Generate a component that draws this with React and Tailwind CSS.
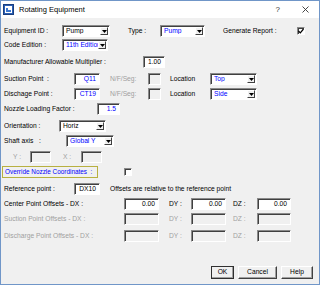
import React from 'react';

const Sunken = ({ w, children, disabled = false, blue = false }) => (
  <div
    className={`${w} h-[12px] flex items-center justify-end pr-[3px] border border-t-[#8a8a8a] border-l-[#8a8a8a] border-r-white border-b-white shadow-[inset_1px_1px_0_#404040] ${
      disabled ? 'bg-[#f0f0f0]' : 'bg-white'
    } ${blue ? 'text-[#0000ff]' : 'text-black'}`}
  >
    {children}
  </div>
);

const Drop = ({ w, value, blue = false }) => (
  <div className={`${w} h-[12px] flex items-center bg-white border border-t-[#8a8a8a] border-l-[#8a8a8a] border-r-white border-b-white shadow-[inset_1px_1px_0_#404040]`}>
    <span className={`flex-1 pl-[3px] overflow-hidden ${blue ? 'text-[#0000ff]' : 'text-black'}`}>{value}</span>
    <span className="w-[8px] h-[8px] mr-[1px] shrink-0 bg-[#f0f0f0] border border-t-white border-l-white border-r-[#404040] border-b-[#404040] flex items-center justify-center">
      <svg width="5" height="3" viewBox="0 0 5 3">
        <path d="M0 0h5L2.5 3z" fill="#000" />
      </svg>
    </span>
  </div>
);

const Check = ({ checked = false }) => (
  <div className="w-[8px] h-[8px] bg-white border border-t-[#8a8a8a] border-l-[#8a8a8a] border-r-white border-b-white shadow-[inset_1px_1px_0_#404040] flex items-center justify-center">
    {checked && (
      <svg width="6" height="6" viewBox="0 0 6 6">
        <path d="M0.5 3l1.8 1.8L5.5 1" fill="none" stroke="#000" strokeWidth="1.2" />
      </svg>
    )}
  </div>
);

const Button = ({ w, children, primary = false }) => (
  <div
    className={`${w} h-[13px] flex items-center justify-center bg-[#f0f0f0] border ${
      primary ? 'border-[#303030]' : 'border-t-white border-l-white border-r-[#404040] border-b-[#404040]'
    } shadow-[inset_-1px_-1px_0_#a0a0a0]`}
  >
    {children}
  </div>
);

const OffsetRow = ({ label, disabled = false, className }) => {
  const txt = disabled ? 'text-[#a0a0a0]' : 'text-black';
  return (
    <div className={`flex items-center h-[12px] pl-[3px] ${className}`}>
      <span className={`w-[120px] ${txt}`}>{label}</span>
      <Sunken w="w-[35px]" disabled={disabled}>{disabled ? '' : '0.00'}</Sunken>
      <span className={`ml-[10px] w-[22px] ${txt}`}>DY :</span>
      <Sunken w="w-[35px]" disabled={disabled}>{disabled ? '' : '0.00'}</Sunken>
      <span className={`ml-[7px] w-[24px] ${txt}`}>DZ :</span>
      <Sunken w="w-[34px]" disabled={disabled}>{disabled ? '' : '0.00'}</Sunken>
    </div>
  );
};

export default function App() {
  return (
    <div className="w-[320px] h-[285px] flex flex-col border border-[#7096c8] bg-[#f0f0f0] font-['Liberation_Sans',Arial,sans-serif] text-[6.7px] leading-none text-black whitespace-nowrap overflow-hidden">
      {/* title bar */}
      <div className="h-[17px] shrink-0 flex items-center bg-white pl-[2px]">
        <svg width="11" height="11" viewBox="0 0 11 11">
          <rect x="0.5" y="0.5" width="10" height="10" fill="#2b5fb4" stroke="#1a3f80" />
          <rect x="2" y="2" width="7" height="7" fill="#ffffff" />
          <path d="M3 8V4h2v2h3v2z" fill="#3c78d0" />
        </svg>
        <span className="ml-[5px] text-[7.5px]">Rotating Equipment</span>
        <span className="ml-auto text-[8px] text-[#333]">?</span>
        <svg className="ml-[22px] mr-[10px]" width="7" height="7" viewBox="0 0 7 7">
          <path d="M0.5 0.5l6 6M6.5 0.5l-6 6" stroke="#333" strokeWidth="0.9" />
        </svg>
      </div>

      {/* Equipment ID / Type / Generate Report */}
      <div className="flex items-center h-[12px] mt-[7px] pl-[3px]">
        <span className="w-[58px]">Equipment ID :</span>
        <Drop w="w-[48px]" value="Pump" />
        <span className="ml-[18px] w-[32px]">Type :</span>
        <Drop w="w-[45px]" value="Pump" blue />
        <span className="ml-[18px] w-[74px]">Generate Report :</span>
        <Check checked />
      </div>

      <div className="flex items-center h-[12px] mt-[2px] pl-[3px]">
        <span className="w-[58px]">Code Edition :</span>
        <Drop w="w-[46px]" value="11th Edition" blue />
      </div>

      <div className="flex items-center h-[12px] mt-[5px] pl-[3px]">
        <span className="w-[139px]">Manufacturer Allowable Multiplier :</span>
        <Sunken w="w-[22px]">1.00</Sunken>
      </div>

      <div className="flex items-center h-[12px] mt-[5px] pl-[3px]">
        <span className="w-[70px]">Suction Point&nbsp;&nbsp;:</span>
        <Sunken w="w-[26px]" blue>Q11</Sunken>
        <span className="ml-[10px] w-[38px] text-[#a0a0a0]">N/F/Seg:</span>
        <Sunken w="w-[13px]" disabled />
        <span className="ml-[9px] w-[40px]">Location</span>
        <Drop w="w-[47px]" value="Top" blue />
      </div>

      <div className="flex items-center h-[12px] mt-[3px] pl-[3px]">
        <span className="w-[70px]">Dischage Point :</span>
        <Sunken w="w-[26px]" blue>CT19</Sunken>
        <span className="ml-[10px] w-[38px] text-[#a0a0a0]">N/F/Seg:</span>
        <Sunken w="w-[13px]" disabled />
        <span className="ml-[9px] w-[40px]">Location</span>
        <Drop w="w-[47px]" value="Side" blue />
      </div>

      <div className="flex items-center h-[12px] mt-[3px] pl-[3px]">
        <span className="w-[93px]">Nozzle Loading Factor :</span>
        <Sunken w="w-[23px]" blue>1.5</Sunken>
      </div>

      <div className="flex items-center h-[12px] mt-[5px] pl-[3px]">
        <span className="w-[55px]">Orientation :</span>
        <Drop w="w-[47px]" value="Horiz" />
      </div>

      <div className="flex items-center h-[12px] mt-[3px] pl-[3px]">
        <span className="w-[62px]">Shaft axis&nbsp;&nbsp;&nbsp;:</span>
        <Drop w="w-[48px]" value="Global Y" blue />
      </div>

      <div className="flex items-center h-[12px] mt-[4px] pl-[12px] text-[#a0a0a0]">
        <span className="w-[17px]">Y :</span>
        <Sunken w="w-[21px]" disabled />
        <span className="ml-[12px] w-[18px]">X :</span>
        <Sunken w="w-[21px]" disabled />
      </div>

      <div className="flex items-center h-[12px] mt-[3px] pl-[1px]">
        <span className="w-[96px] h-[12px] flex items-center pl-[2px] border border-[#b8b040] text-[#0000ff] text-[6.4px]">
          Override Nozzle Coordinates&nbsp;&nbsp;:
        </span>
        <span className="ml-[26px]">
          <Check />
        </span>
      </div>

      <div className="flex items-center h-[12px] mt-[5px] pl-[3px]">
        <span className="w-[70px]">Reference point :</span>
        <Sunken w="w-[26px]">DX10</Sunken>
        <span className="ml-[10px]">Offsets are relative to the reference point</span>
      </div>

      <OffsetRow className="mt-[3px]" label={'Center Point Offsets -  DX :'} />
      <OffsetRow className="mt-[3px]" label="Suction Point Offsets -  DX :" disabled />
      <OffsetRow className="mt-[5px]" label="Discharge Point Offsets - DX :" disabled />

      <div className="flex items-center justify-end gap-[4px] mt-[24px] pr-[6px]">
        <Button w="w-[23px]" primary>OK</Button>
        <Button w="w-[39px]">Cancel</Button>
        <Button w="w-[32px]">Help</Button>
      </div>
    </div>
  );
}
